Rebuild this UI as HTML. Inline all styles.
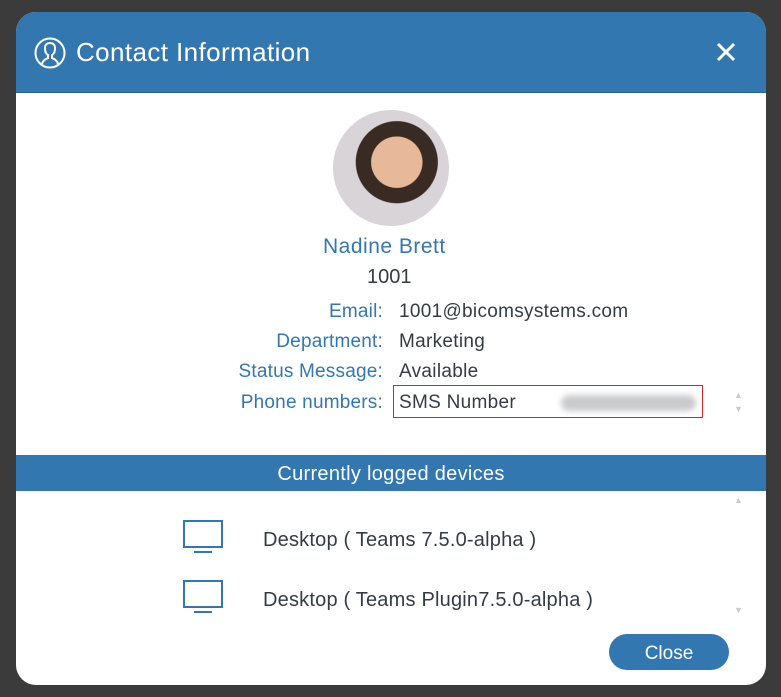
<!DOCTYPE html>
<html><head><style>
body{margin:0;width:781px;height:697px;background:#3b3b3b;font-family:"Liberation Sans",sans-serif;position:relative;overflow:hidden}
.dlg{position:absolute;left:16px;top:12px;width:750px;height:673px;background:#fff;border-radius:20px;overflow:hidden}
.hd{position:absolute;left:0;top:0;width:750px;height:80px;background:#3277b0;border-bottom:1px solid #2a6496}
.hd .t{position:absolute;left:60px;top:25px;color:#fff;font-size:26px;letter-spacing:0.4px}
.ab{position:absolute;color:#333c46;font-size:20px;white-space:nowrap}
.lb{position:absolute;color:#3277b0;font-size:19px;text-align:right;right:383px;white-space:nowrap;letter-spacing:0.2px}
.v{position:absolute;left:383px;color:#333c46;font-size:19px;white-space:nowrap;letter-spacing:0.3px}
</style></head><body>
<div class="dlg">
 <div class="hd">
  <svg style="position:absolute;left:18px;top:25px" width="32" height="32" viewBox="0 0 32 32" fill="none" stroke="#fff" stroke-width="2"><circle cx="16" cy="16" r="14.5"/><path d="M8 27c1-4 4-5 6-6v-3c-2-1-3-4-3-7 0-3 2-5 5-5s5 2 5 5c0 3-1 6-3 7v3c2 1 5 2 6 6"/></svg>
  <div class="t">Contact Information</div>
  <svg style="position:absolute;left:700px;top:30px" width="20" height="20" viewBox="0 0 20 20" stroke="#fff" stroke-width="3"><path d="M2 2L18 18M18 2L2 18"/></svg>
 </div>
 <div style="position:absolute;left:317px;top:98px;width:116px;height:116px;border-radius:50%;background:radial-gradient(circle at 55% 45%,#e8b89a 0 28%,#3a2a24 29% 45%,#d9d4d8 46%)"></div>
 <div class="ab" style="left:307px;top:223px;color:#3277b0;font-size:21px;letter-spacing:0.5px">Nadine Brett</div>
 <div class="ab" style="left:351px;top:254px">1001</div>
 <div class="lb" style="top:289px">Email:</div><div class="v" style="top:289px">1001@bicomsystems.com</div>
 <div class="lb" style="top:319px">Department:</div><div class="v" style="top:319px">Marketing</div>
 <div class="lb" style="top:349px">Status Message:</div><div class="v" style="top:349px">Available</div>
 <div class="lb" style="top:380px">Phone numbers:</div>
 <div style="position:absolute;left:377px;top:373px;width:308px;height:31px;border:1px solid #d8232a"></div>
 <div class="v" style="top:380px">SMS Number</div>
 <div style="position:absolute;left:545px;top:383px;width:135px;height:16px;background:#c8cacc;border-radius:8px;filter:blur(3px)"></div>
 <div style="position:absolute;left:718px;top:376px;color:#ccc;font-size:9px;line-height:14px">▲<br>▼</div>
 <div style="position:absolute;left:0;top:443px;width:750px;height:36px;background:#3277b0;color:#fff;font-size:20px;text-align:center;line-height:38px;letter-spacing:0.3px">Currently logged devices</div>
 <div style="position:absolute;left:718px;top:483px;color:#ccc;font-size:9px">▲</div>
 <div style="position:absolute;left:718px;top:593px;color:#ccc;font-size:9px">▼</div>
 <svg style="position:absolute;left:166px;top:507px" width="42" height="36" viewBox="0 0 42 36" fill="none" stroke="#3277b0" stroke-width="2"><rect x="2" y="2" width="38" height="26"/><path d="M12 33h18"/></svg>
 <div class="ab" style="left:247px;top:517px;letter-spacing:0.2px">Desktop ( Teams 7.5.0-alpha )</div>
 <svg style="position:absolute;left:166px;top:567px" width="42" height="36" viewBox="0 0 42 36" fill="none" stroke="#3277b0" stroke-width="2"><rect x="2" y="2" width="38" height="26"/><path d="M12 33h18"/></svg>
 <div class="ab" style="left:247px;top:577px;letter-spacing:0.2px">Desktop ( Teams Plugin7.5.0-alpha )</div>
 <div style="position:absolute;left:593px;top:622px;width:120px;height:36px;border-radius:18px;background:#3277b0;color:#fff;font-size:19px;text-align:center;line-height:40px">Close</div>
</div>
</body></html>
